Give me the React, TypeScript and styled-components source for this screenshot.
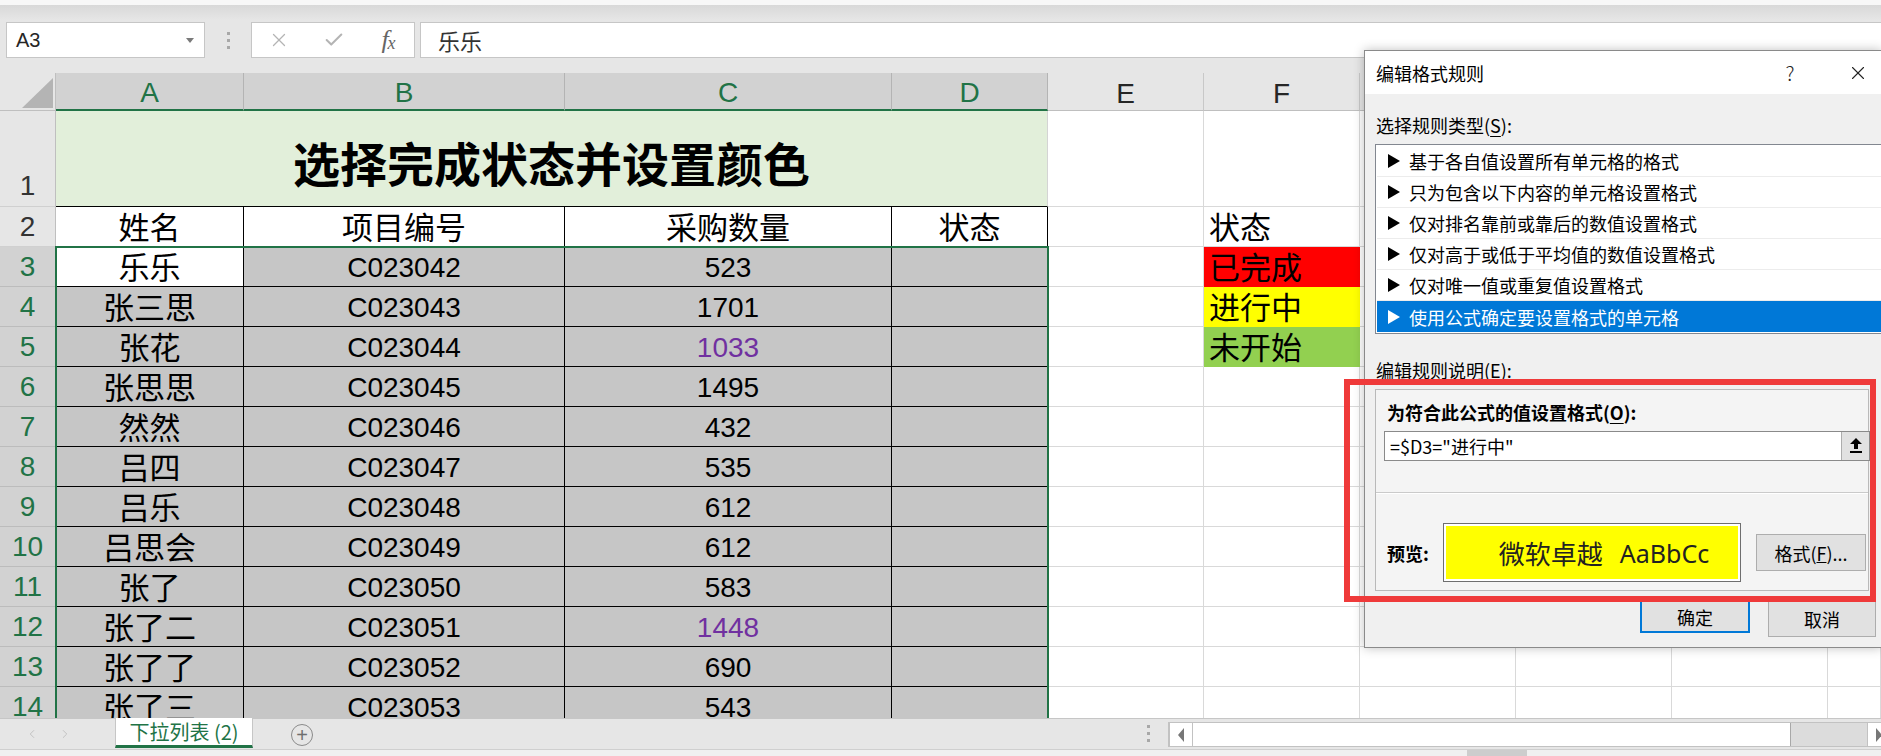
import React from 'react';
import styled, { createGlobalStyle } from 'styled-components';
import { X, Check, ChevronLeft, ChevronRight } from 'lucide-react';

const GREEN = '#217346';
const CJK = '"Noto Sans CJK SC", sans-serif';
const SHEET = '"Liberation Sans", "Noto Sans CJK SC", sans-serif';

const GlobalStyle = createGlobalStyle`
  * { box-sizing: border-box; }
  html, body { margin: 0; padding: 0; background: #e6e6e6; }
  body { font-family: ${CJK}; overflow: hidden; }
`;

const Page = styled.div`
  position: relative;
  width: 1881px;
  height: 756px;
  overflow: hidden;
  display: flex;
  flex-direction: column;
  background: #e6e6e6;
`;

const RibbonEdge = styled.div`
  height: 5px;
  flex-shrink: 0;
  background: #f7f7f7;
`;

const FormulaBar = styled.div`
  height: 68px;
  flex-shrink: 0;
  display: flex;
  align-items: flex-start;
  padding: 17px 0 0 6px;
  background: linear-gradient(#d8d8d8, #e6e6e6 15px);
`;

const NameBox = styled.div`
  width: 199px;
  height: 36px;
  background: #fff;
  border: 1px solid #c6c6c6;
  display: flex;
  align-items: center;
  justify-content: space-between;
  padding: 0 10px 0 9px;
  font: 20px "Liberation Sans", sans-serif;
  color: #262626;
`;

const Caret = styled.span`
  width: 0;
  height: 0;
  border-left: 4px solid transparent;
  border-right: 4px solid transparent;
  border-top: 5px solid #7a7a7a;
`;

const Grip = styled.div`
  width: 46px;
  height: 36px;
  display: flex;
  flex-direction: column;
  align-items: center;
  justify-content: center;
  gap: 4px;
`;

const GripDot = styled.span`
  width: 3px;
  height: 3px;
  background: #a8a8a8;
`;

const FxButtons = styled.div`
  width: 164px;
  height: 36px;
  background: #fff;
  border: 1px solid #c6c6c6;
  display: grid;
  grid-template-columns: 54px 56px 52px;
  align-items: center;
  justify-items: center;
  color: #b4b4b4;
`;

const FxLabel = styled.span`
  font: italic 26px/1 "Liberation Serif", serif;
  color: #666;
  letter-spacing: -1px;
  sub {
    font-size: 18px;
    vertical-align: -1px;
  }
`;

const FormulaInput = styled.div`
  flex: 1;
  height: 36px;
  margin-left: 5px;
  background: #fff;
  border: 1px solid #c6c6c6;
  border-right: none;
  display: flex;
  align-items: center;
  padding-left: 17px;
  font: 22px ${CJK};
  color: #333;
`;

const Sheet = styled.div`
  position: relative;
  flex: 1;
  min-height: 0;
  overflow: hidden;
  display: grid;
  grid-template-columns: 56px 188px 321px 327px repeat(6, 156px) 1fr;
  grid-template-rows: 38px 96px 40px repeat(12, 40px);
  background: #fff;
`;

const Corner = styled.div`
  background: #e6e6e6;
  border-right: 1px solid #bfbfbf;
  border-bottom: 1px solid #bfbfbf;
  display: flex;
  align-items: flex-end;
  justify-content: flex-end;
  padding: 0 2px 2px 0;
`;

const CornerMark = styled.div`
  width: 0;
  height: 0;
  border-left: 31px solid transparent;
  border-bottom: 30px solid #b4b4b4;
`;

const ColHeader = styled.div<{ $on?: boolean }>`
  display: flex;
  align-items: center;
  justify-content: center;
  padding-top: 4px;
  font: 28px "Liberation Sans", sans-serif;
  color: ${(p) => (p.$on ? GREEN : '#262626')};
  background: ${(p) => (p.$on ? '#d2d2d2' : '#e6e6e6')};
  border-right: 1px solid ${(p) => (p.$on ? '#b4b4b4' : '#c8c8c8')};
  border-bottom: ${(p) => (p.$on ? `2px solid ${GREEN}` : '1px solid #bfbfbf')};
`;

const RowHeader = styled.div<{ $on?: boolean; $low?: boolean }>`
  display: flex;
  justify-content: center;
  align-items: ${(p) => (p.$low ? 'flex-end' : 'center')};
  font: 28px/40px "Liberation Sans", sans-serif;
  color: ${(p) => (p.$on ? GREEN : '#333')};
  background: ${(p) => (p.$on ? '#d2d2d2' : '#e6e6e6')};
  border-right: 1px solid #bfbfbf;
  border-bottom: 1px solid ${(p) => (p.$on ? '#bcbcbc' : '#d0d0d0')};
`;

const TitleCell = styled.div`
  grid-column: span 4;
  display: flex;
  align-items: center;
  justify-content: center;
  padding-top: 6px;
  background: #e2efda;
  border-right: 1px solid #d4d4d4;
  border-bottom: 1px solid #000;
  font: 700 47px/1 ${CJK};
  color: #000;
`;

const HeadCell = styled.div`
  display: flex;
  align-items: center;
  justify-content: center;
  padding-top: 4px;
  background: #fff;
  border-right: 1px solid #000;
  border-bottom: 1px solid #000;
  font: 31px/1 ${SHEET};
  color: #000;
`;

const DataCell = styled.div<{ $shade: boolean; $num?: boolean; $tint?: string }>`
  display: flex;
  align-items: center;
  justify-content: center;
  padding-top: 3px;
  background: ${(p) => (p.$shade ? '#c6c6c6' : '#fff')};
  border-right: 1px solid #000;
  border-bottom: 1px solid #000;
  font-family: ${SHEET};
  font-size: ${(p) => (p.$num ? 28 : 31)}px;
  line-height: 1;
  color: ${(p) => p.$tint ?? '#000'};
`;

const GridCell = styled.div<{ $fill?: string }>`
  display: flex;
  align-items: center;
  padding: 3px 0 0 5px;
  background: ${(p) => p.$fill ?? '#fff'};
  border-right: 1px solid ${(p) => p.$fill ?? '#d9d9d9'};
  border-bottom: 1px solid ${(p) => p.$fill ?? '#d9d9d9'};
  font: 31px/1 ${SHEET};
  color: #000;
`;

const Selection = styled.div`
  position: absolute;
  left: 55px;
  top: 173px;
  width: 994px;
  height: 520px;
  border: 2px solid ${GREEN};
  pointer-events: none;
`;

const TabBar = styled.div`
  height: 31px;
  flex-shrink: 0;
  display: flex;
  align-items: flex-start;
  background: #e6e6e6;
  border-top: 1px solid #c6c6c6;
`;

const TabNav = styled.div`
  width: 115px;
  height: 29px;
  display: flex;
  align-items: center;
  gap: 19px;
  padding-left: 25px;
  color: #bdbdbd;
`;

const SheetTab = styled.div`
  width: 138px;
  height: 30px;
  margin-top: -1px;
  background: #fff;
  border-left: 1px solid #c6c6c6;
  border-right: 1px solid #c6c6c6;
  border-bottom: 3px solid ${GREEN};
  display: flex;
  align-items: center;
  justify-content: center;
  font: 20px ${CJK};
  color: ${GREEN};
`;

const AddSheet = styled.div`
  width: 22px;
  height: 22px;
  margin: 5px 0 0 38px;
  border: 1.5px solid #8a8a8a;
  border-radius: 50%;
  display: flex;
  align-items: center;
  justify-content: center;
  font: 20px/1 "Liberation Sans", sans-serif;
  color: #6f6f6f;
`;

const Spacer = styled.div`
  flex: 1;
`;

const ScrollGrip = styled(Grip)`
  width: 8px;
  height: 29px;
  margin-right: 16px;
`;

const ScrollBar = styled.div`
  width: 724px;
  flex-shrink: 0;
  height: 25px;
  margin: 3px -11px 0 0;
  display: flex;
  background: #dcdcdc;
  border: 1px solid #c2c2c2;
`;

const ScrollBtn = styled.div`
  width: 24px;
  background: #fff;
  display: flex;
  align-items: center;
  justify-content: center;
  border-right: 1px solid #c2c2c2;
  border-left: 1px solid #c2c2c2;
`;

const Arrow = styled.span<{ $dir: 'left' | 'right' }>`
  width: 0;
  height: 0;
  border-top: 7px solid transparent;
  border-bottom: 7px solid transparent;
  ${(p) => (p.$dir === 'left' ? 'border-right: 6px solid #777;' : 'border-left: 6px solid #777;')}
`;

const Thumb = styled.div`
  width: 598px;
  background: #fff;
  border-right: 1px solid #a8a8a8;
`;

const Track = styled.div`
  width: 76px;
`;

const StatusEdge = styled.div`
  height: 7px;
  flex-shrink: 0;
  background: #f0f0f0;
  border-top: 1px solid #cfcfcf;
  display: flex;
`;

const StatusBlock = styled.div`
  width: 60px;
  margin-left: 1467px;
  background: #cdcdcd;
`;

/* dialog */

const Dialog = styled.div`
  position: absolute;
  left: 1364px;
  top: 50px;
  width: 518px;
  height: 598px;
  background: #f0f0f0;
  border: 1px solid #8a8a8a;
  box-shadow: 0 0 10px rgba(0, 0, 0, 0.25);
  display: flex;
  flex-direction: column;
  font-family: ${CJK};
  color: #000;
`;

const TitleBar = styled.div`
  height: 43px;
  flex-shrink: 0;
  background: #fff;
  display: flex;
  align-items: center;
  padding-left: 11px;
  font-size: 18px;
`;

const TitleText = styled.div`
  flex: 1;
`;

const TitleBtn = styled.div`
  width: 46px;
  height: 43px;
  display: flex;
  align-items: center;
  justify-content: center;
  font-size: 20px;
  font-weight: 300;
  color: #222;
`;

const HelpBtn = styled(TitleBtn)`
  margin-right: 22px;
`;

const DialogBody = styled.div`
  display: flex;
  flex-direction: column;
  padding: 0 12px 0 10px;
`;

const Label = styled.div<{ $gap: number }>`
  margin-top: ${(p) => p.$gap}px;
  height: 28px;
  line-height: 28px;
  padding-left: 1px;
  font-size: 18px;
  u {
    text-underline-offset: 3px;
  }
`;

const RuleList = styled.div`
  margin: 5px -14px 0 0;
  background: #fff;
  border: 1px solid #828790;
  padding: 1px;
`;

const RuleItem = styled.div<{ $active?: boolean }>`
  height: 31px;
  display: flex;
  align-items: center;
  padding-left: 11px;
  font-size: 18px;
  background: ${(p) => (p.$active ? '#0078d7' : '#fff')};
  color: ${(p) => (p.$active ? '#fff' : '#000')};
  border-bottom: 1px solid ${(p) => (p.$active ? '#0078d7' : '#ececec')};
  &:last-child {
    border-bottom: none;
  }
`;

const RuleArrow = styled.span`
  width: 0;
  height: 0;
  margin-right: 9px;
  border-top: 7px solid transparent;
  border-bottom: 7px solid transparent;
  border-left: 12px solid currentColor;
`;

const Panel = styled.div`
  margin-top: 5px;
  height: 202px;
  border: 1px solid #b9b9b9;
  background: #f4f4f4;
  display: flex;
  flex-direction: column;
`;

const PanelLabel = styled.div`
  margin-top: 8px;
  padding-left: 11px;
  height: 28px;
  line-height: 28px;
  font-size: 18px;
  font-weight: 700;
  u {
    text-underline-offset: 3px;
  }
`;

const FormulaField = styled.div`
  margin: 5px -2px 0 8px;
  height: 30px;
  display: flex;
  background: #fff;
  border: 1px solid #8a8a8a;
`;

const FieldText = styled.div`
  flex: 1;
  display: flex;
  align-items: center;
  padding-left: 5px;
  font-size: 18px;
`;

const CollapseBtn = styled.div`
  width: 28px;
  display: flex;
  align-items: center;
  justify-content: center;
  background: #e1e1e1;
  border-left: 1px solid #adadad;
`;

const Rule = styled.div`
  margin-top: 31px;
  height: 2px;
  border-top: 1px solid #cacaca;
  border-bottom: 1px solid #fff;
`;

const PreviewRow = styled.div`
  margin-top: 29px;
  height: 59px;
  display: flex;
  align-items: center;
`;

const PreviewLabel = styled.div`
  width: 67px;
  padding-left: 11px;
  font-size: 18px;
  font-weight: 700;
`;

const PreviewBox = styled.div`
  width: 298px;
  height: 59px;
  display: flex;
  align-items: center;
  justify-content: center;
  gap: 17px;
  padding-left: 24px;
  background: #ffff00;
  border: 1px solid #6e6e6e;
  box-shadow: inset 0 0 0 2px #fff;
  font-size: 26px;
  color: #222;
`;

const PreviewLatin = styled.span`
  font: 25px "Noto Sans", sans-serif;
`;

const DialogButton = styled.div<{ $default?: boolean; $w: number }>`
  width: ${(p) => p.$w}px;
  height: ${(p) => (p.$default ? 33 : 37)}px;
  display: flex;
  align-items: center;
  justify-content: center;
  background: #e1e1e1;
  border: ${(p) => (p.$default ? '2px solid #0078d7' : '1px solid #adadad')};
  font-size: 18px;
  color: #000;
`;

const FormatBtnWrap = styled.div`
  margin-left: 15px;
`;

const ButtonRow = styled.div`
  margin: 9px -7px 0 0;
  display: flex;
  justify-content: flex-end;
  gap: 18px;
`;

const Annotation = styled.div`
  position: absolute;
  left: 1344px;
  top: 379px;
  width: 532px;
  height: 223px;
  border: 6px solid #ef3a3a;
  pointer-events: none;
`;

const COLS = ['A', 'B', 'C', 'D', 'E', 'F', 'G', 'H', 'I', 'J'];

const ROWS: [string, string, string][] = [
  ['乐乐', 'C023042', '523'],
  ['张三思', 'C023043', '1701'],
  ['张花', 'C023044', '1033'],
  ['张思思', 'C023045', '1495'],
  ['然然', 'C023046', '432'],
  ['吕四', 'C023047', '535'],
  ['吕乐', 'C023048', '612'],
  ['吕思会', 'C023049', '612'],
  ['张了', 'C023050', '583'],
  ['张了二', 'C023051', '1448'],
  ['张了了', 'C023052', '690'],
  ['张了三', 'C023053', '543'],
];

const PURPLE = new Set(['1033', '1448']);

const LEGEND: Record<number, [string, string]> = {
  0: ['已完成', '#ff0000'],
  1: ['进行中', '#ffff00'],
  2: ['未开始', '#92d050'],
};

const RULES = [
  '基于各自值设置所有单元格的格式',
  '只为包含以下内容的单元格设置格式',
  '仅对排名靠前或靠后的数值设置格式',
  '仅对高于或低于平均值的数值设置格式',
  '仅对唯一值或重复值设置格式',
  '使用公式确定要设置格式的单元格',
];

const UploadIcon = () => (
  <svg width="12" height="16" viewBox="0 0 12 16">
    <polygon points="6,0 12,6 8,6 8,11 4,11 4,6 0,6" fill="#000" />
    <rect x="0" y="13" width="12" height="2" fill="#000" />
  </svg>
);

const Blanks = ({ n }: { n: number }) => (
  <>
    {Array.from({ length: n }, (_, i) => (
      <GridCell key={i} />
    ))}
  </>
);

const App: React.FC = () => (
  <Page>
    <GlobalStyle />
    <RibbonEdge />
    <FormulaBar>
      <NameBox>
        A3
        <Caret />
      </NameBox>
      <Grip>
        <GripDot />
        <GripDot />
        <GripDot />
      </Grip>
      <FxButtons>
        <X size={22} strokeWidth={1.4} />
        <Check size={22} strokeWidth={2.2} />
        <FxLabel>
          f<sub>x</sub>
        </FxLabel>
      </FxButtons>
      <FormulaInput>乐乐</FormulaInput>
    </FormulaBar>

    <Sheet>
      <Corner>
        <CornerMark />
      </Corner>
      {COLS.map((c, i) => (
        <ColHeader key={c} $on={i < 4}>
          {c}
        </ColHeader>
      ))}

      <RowHeader $low>1</RowHeader>
      <TitleCell>选择完成状态并设置颜色</TitleCell>
      <Blanks n={6} />

      <RowHeader>2</RowHeader>
      {['姓名', '项目编号', '采购数量', '状态'].map((h) => (
        <HeadCell key={h}>{h}</HeadCell>
      ))}
      <GridCell />
      <GridCell>状态</GridCell>
      <Blanks n={4} />

      {ROWS.map(([name, code, qty], i) => (
        <React.Fragment key={code}>
          <RowHeader $on>{i + 3}</RowHeader>
          <DataCell $shade={i > 0}>{name}</DataCell>
          <DataCell $shade $num>
            {code}
          </DataCell>
          <DataCell $shade $num $tint={PURPLE.has(qty) ? '#7030a0' : undefined}>
            {qty}
          </DataCell>
          <DataCell $shade />
          <GridCell />
          {LEGEND[i] ? <GridCell $fill={LEGEND[i][1]}>{LEGEND[i][0]}</GridCell> : <GridCell />}
          <Blanks n={4} />
        </React.Fragment>
      ))}
      <Selection />
    </Sheet>

    <TabBar>
      <TabNav>
        <ChevronLeft size={14} strokeWidth={1.5} />
        <ChevronRight size={14} strokeWidth={1.5} />
      </TabNav>
      <SheetTab>下拉列表 (2)</SheetTab>
      <AddSheet>+</AddSheet>
      <Spacer />
      <ScrollGrip>
        <GripDot />
        <GripDot />
        <GripDot />
      </ScrollGrip>
      <ScrollBar>
        <ScrollBtn>
          <Arrow $dir="left" />
        </ScrollBtn>
        <Thumb />
        <Track />
        <ScrollBtn>
          <Arrow $dir="right" />
        </ScrollBtn>
      </ScrollBar>
    </TabBar>
    <StatusEdge>
      <StatusBlock />
    </StatusEdge>

    <Dialog>
      <TitleBar>
        <TitleText>编辑格式规则</TitleText>
        <HelpBtn>?</HelpBtn>
        <TitleBtn>
          <X size={22} strokeWidth={1.2} />
        </TitleBtn>
      </TitleBar>
      <DialogBody>
        <Label $gap={17}>
          选择规则类型(<u>S</u>):
        </Label>
        <RuleList>
          {RULES.map((r, i) => (
            <RuleItem key={r} $active={i === RULES.length - 1}>
              <RuleArrow />
              {r}
            </RuleItem>
          ))}
        </RuleList>
        <Label $gap={22}>
          编辑规则说明(<u>E</u>):
        </Label>
        <Panel>
          <PanelLabel>
            为符合此公式的值设置格式(<u>O</u>):
          </PanelLabel>
          <FormulaField>
            <FieldText>=$D3="进行中"</FieldText>
            <CollapseBtn>
              <UploadIcon />
            </CollapseBtn>
          </FormulaField>
          <Rule />
          <PreviewRow>
            <PreviewLabel>预览:</PreviewLabel>
            <PreviewBox>
              <span>微软卓越</span>
              <PreviewLatin>AaBbCc</PreviewLatin>
            </PreviewBox>
            <FormatBtnWrap>
              <DialogButton $w={110}>
                格式(<u>F</u>)...
              </DialogButton>
            </FormatBtnWrap>
          </PreviewRow>
        </Panel>
        <ButtonRow>
          <DialogButton $default $w={110}>
            确定
          </DialogButton>
          <DialogButton $w={108}>取消</DialogButton>
        </ButtonRow>
      </DialogBody>
    </Dialog>
    <Annotation />
  </Page>
);

export default App;
